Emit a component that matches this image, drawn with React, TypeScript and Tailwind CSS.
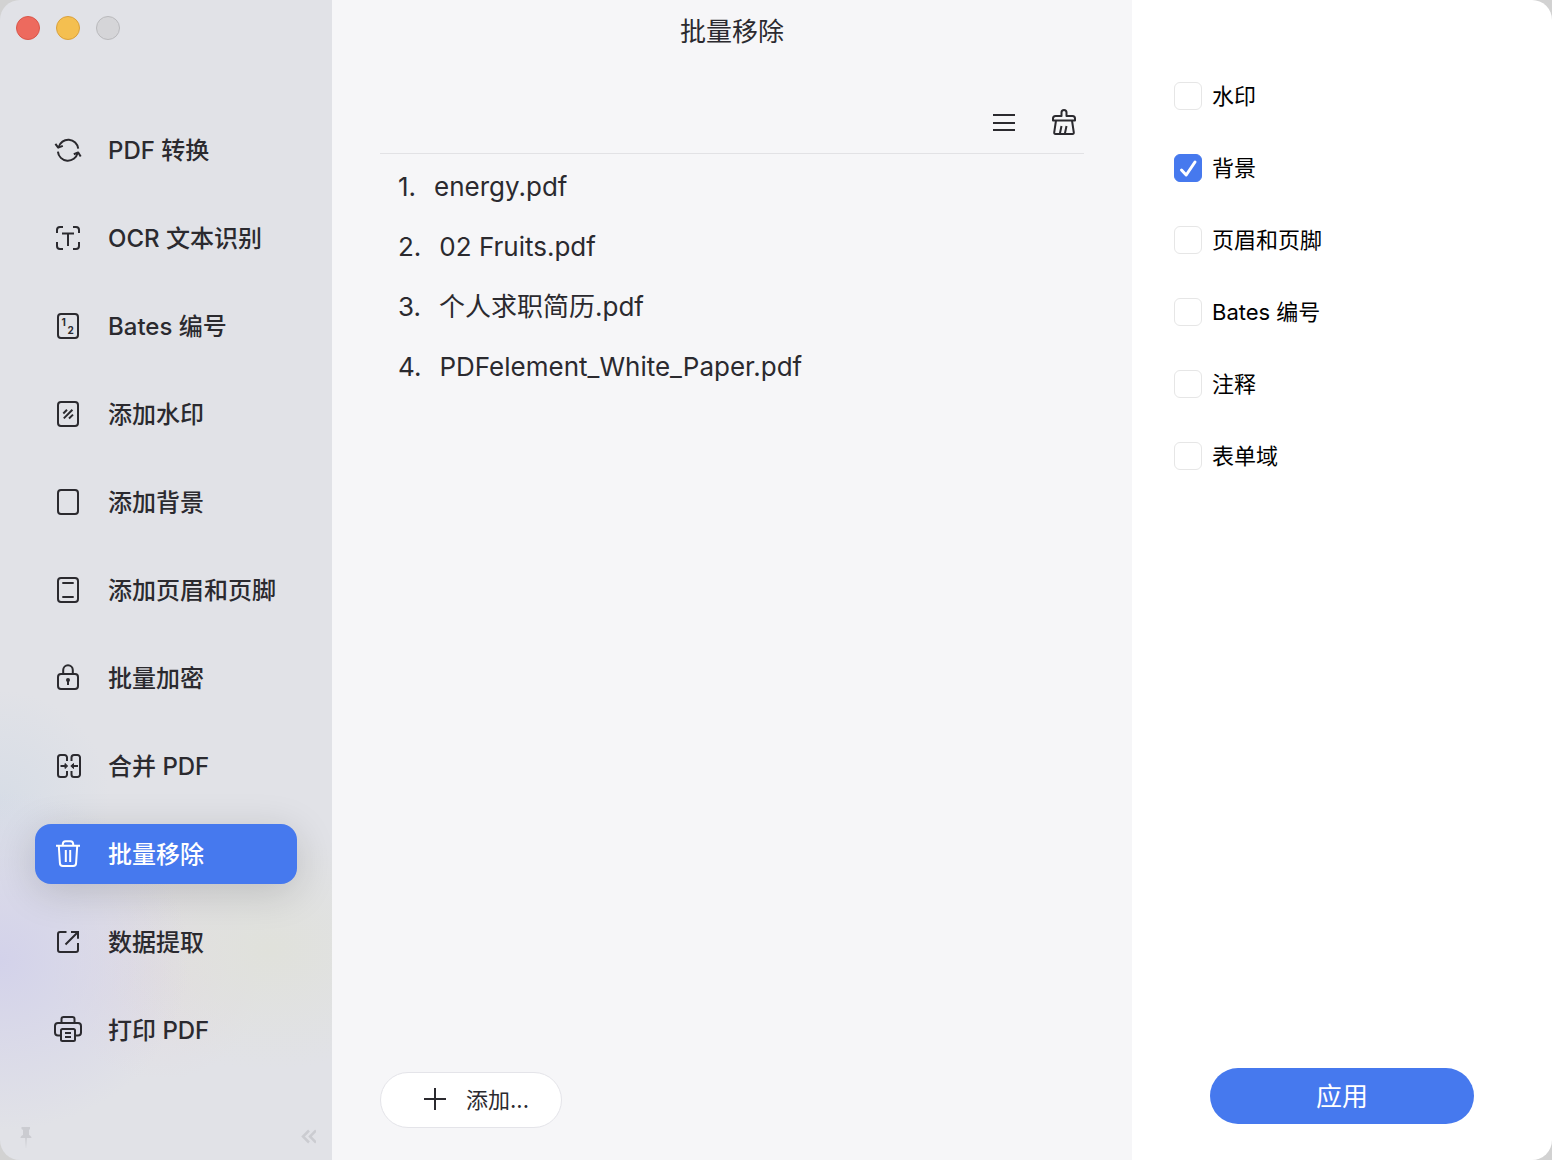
import { useState } from "react";
import type { ReactNode } from "react";

interface NavItem {
  id: string;
  label: string;
  icon: ReactNode;
}

interface RemoveOption {
  id: string;
  label: string;
}

function Icon({ children }: { children: ReactNode }) {
  return (
    <svg
      viewBox="0 0 28 28"
      className="w-7 h-7 shrink-0 overflow-visible"
      fill="none"
      stroke="currentColor"
      strokeWidth="2"
      strokeLinejoin="round"
      aria-hidden="true"
    >
      {children}
    </svg>
  );
}

const pageFrame = <rect x="4" y="2" width="20" height="24" rx="3" />;

const navItems: NavItem[] = [
  {
    id: "convert",
    label: "PDF 转换",
    icon: (
      <Icon>
        <path d="M4.6 11.2A10 10 0 0 1 24.2 12.6M3.9 15.6A10 10 0 0 0 23.6 17" />
        <path d="M1.4 7.8L4.2 11.7L8.8 9.8M26.7 20.5L24.2 16.4L19.8 18.2" />
      </Icon>
    ),
  },
  {
    id: "ocr",
    label: "OCR 文本识别",
    icon: (
      <Icon>
        <path d="M3 9V6a3 3 0 0 1 3-3h3M19 3h3a3 3 0 0 1 3 3v3M25 18v4a3 3 0 0 1-3 3h-3M9 25H6a3 3 0 0 1-3-3v-4" />
        <path d="M8 9.5h12M14 9.5V22" />
      </Icon>
    ),
  },
  {
    id: "bates",
    label: "Bates 编号",
    icon: (
      <Icon>
        {pageFrame}
        <g fill="currentColor" stroke="none" className="text-[10px] font-bold">
          <text x="7.5" y="13.5">1</text>
          <text x="13.5" y="21.7">2</text>
        </g>
      </Icon>
    ),
  },
  {
    id: "watermark",
    label: "添加水印",
    icon: (
      <Icon>
        {pageFrame}
        <path d="M9.3 13.5L13 9.8M9.8 18.4L18.4 9.8M15 18.4L19 14.6" />
      </Icon>
    ),
  },
  { id: "background", label: "添加背景", icon: <Icon>{pageFrame}</Icon> },
  {
    id: "header-footer",
    label: "添加页眉和页脚",
    icon: (
      <Icon>
        {pageFrame}
        <path d="M8.3 7h11.4M8.3 21h11.4" />
      </Icon>
    ),
  },
  {
    id: "encrypt",
    label: "批量加密",
    icon: (
      <Icon>
        <rect x="4" y="10" width="20" height="15" rx="3" />
        <path d="M9.2 10V6a4.8 4.8 0 0 1 9.6 0v4M14 16v5" />
        <circle cx="14" cy="16" r="2" fill="currentColor" stroke="none" />
      </Icon>
    ),
  },
  {
    id: "merge",
    label: "合并 PDF",
    icon: (
      <Icon>
        <path d="M13 9V5.5A2.5 2.5 0 0 0 10.5 3h-4A2.5 2.5 0 0 0 4 5.5v17A2.5 2.5 0 0 0 6.5 25h4a2.5 2.5 0 0 0 2.5-2.500V19" />
        <path d="M17.5 9V5.5A2.5 2.5 0 0 1 20 3h3.500A2.5 2.5 0 0 1 26 5.5v17a2.5 2.5 0 0 1-2.500 2.500H20a2.5 2.5 0 0 1-2.500-2.500V19" />
        <path d="M6.5 14H12M24 14h-5.500" />
        <path d="M11 11.5L13.700 14L11 16.5zM19.5 11.5L16.800 14L19.5 16.5z" fill="currentColor" strokeWidth="1" />
      </Icon>
    ),
  },
  {
    id: "remove",
    label: "批量移除",
    icon: (
      <Icon>
        <path d="M2 5.8H26M8.8 5.5V4A3 3 0 0 1 11.5 1.200H16.5A3 3 0 0 1 19.2 4V5.5" />
        <path d="M4.8 6L5.900 23A3 3 0 0 0 8.900 26H19.100A3 3 0 0 0 22.100 23L23.200 6" />
        <path d="M11.8 10V22M16.2 10V22" />
      </Icon>
    ),
  },
  {
    id: "extract",
    label: "数据提取",
    icon: (
      <Icon>
        <path d="M12.5 4H6A2 2 0 0 0 4 6V22A2 2 0 0 0 6 24H22A2 2 0 0 0 24 22V15" />
        <path d="M17 4H24V10.8M11.5 16.5L24 4" strokeLinejoin="miter" />
      </Icon>
    ),
  },
  {
    id: "print",
    label: "打印 PDF",
    icon: (
      <Icon>
        <path d="M7.5 7V3A2 2 0 0 1 9.5 1H18.5A2 2 0 0 1 20.5 3V7" />
        <path d="M7 19.500H4A3 3 0 0 1 1 16.5V10A3 3 0 0 1 4 7H24A3 3 0 0 1 27 10V16.5A3 3 0 0 1 24 19.5H21" />
        <rect x="7" y="13" width="14" height="12" rx="1.5" />
        <path d="M11 17H17M11 21H17" />
      </Icon>
    ),
  },
];

const files = ["energy.pdf", "02 Fruits.pdf", "个人求职简历.pdf", "PDFelement_White_Paper.pdf"];

const removeOptions: RemoveOption[] = [
  { id: "watermark", label: "水印" },
  { id: "background", label: "背景" },
  { id: "header-footer", label: "页眉和页脚" },
  { id: "bates", label: "Bates 编号" },
  { id: "comments", label: "注释" },
  { id: "fields", label: "表单域" },
];

function WindowButtons() {
  return (
    <div className="flex gap-4 px-4 pt-4">
      <button aria-label="关闭" className="size-6 rounded-full border border-[#d9564a] bg-[#ed6a5e]" />
      <button aria-label="最小化" className="size-6 rounded-full border border-[#d9a03c] bg-[#f4bf50]" />
      <button aria-label="缩放" disabled className="size-6 rounded-full border border-[#b9b9bc] bg-[#d5d5d8]" />
    </div>
  );
}

function Sidebar({ active, onSelect }: { active: string; onSelect: (id: string) => void }) {
  return (
    <aside className="flex w-[332px] shrink-0 flex-col bg-[#e1e2e7] bg-[radial-gradient(ellipse_190px_170px_at_0px_960px,#d3d2ea,transparent),radial-gradient(ellipse_170px_120px_at_270px_950px,#e0e1db,transparent),radial-gradient(ellipse_110px_110px_at_0px_800px,#d7dde6,transparent),radial-gradient(ellipse_110px_110px_at_160px_970px,#e2dce1,transparent)]">
      <WindowButtons />
      <nav className="mt-20 flex flex-col gap-7 px-[35px]">
        {navItems.map((item) => (
          <button
            key={item.id}
            onClick={() => onSelect(item.id)}
            className={
              item.id === active
                ? "flex h-[60px] items-center gap-[26px] rounded-2xl bg-[#4679ee] pl-[19px] text-2xl font-medium text-white shadow-[0_8px_40px_rgba(0,0,0,0.16)]"
                : "flex h-[60px] items-center gap-[26px] rounded-2xl pl-[19px] text-2xl font-medium text-[#2b2a2f]"
            }
          >
            {item.icon}
            <span className="whitespace-nowrap pt-0.5">{item.label}</span>
          </button>
        ))}
      </nav>
      <div className="mt-auto flex items-center justify-between px-4 pb-3 text-[#cbccd1]">
        <button aria-label="固定">
          <svg viewBox="0 0 20 24" className="h-6 w-5" fill="currentColor" aria-hidden="true">
            <path d="M5.5 3H14V5L13 6V11C14.5 11.5 15.5 12.5 15.5 14H10.800L10 25L9.200 14H4.500C4.5 12.5 5.5 11.5 7 11V6L5.500 5z" />
          </svg>
        </button>
        <button aria-label="收起侧边栏">
          <svg viewBox="0 0 16 24" className="h-6 w-4" fill="none" stroke="currentColor" strokeWidth="2.5" aria-hidden="true">
            <path d="M9 6.5L3 12.5L9 18.5M16 6.5L10 12.5L16 18.5" />
          </svg>
        </button>
      </div>
    </aside>
  );
}

function FilePanel() {
  return (
    <main className="flex min-w-0 flex-1 flex-col bg-[#f6f6f8] px-12 pb-8 text-[#2b2a2f]">
      <h1 className="mt-3.5 text-center text-[26px] leading-9">批量移除</h1>
      <div className="mt-12 flex h-14 items-center justify-end gap-8 border-b border-[#e2e2e5] pr-[6px] pb-2">
        <button aria-label="列表">
          <Icon>
            <path d="M3 7H25M3 15H25M3 22H25" />
          </Icon>
        </button>
        <button aria-label="清空">
          <Icon>
            <path d="M11.5 8V4.5A2.5 2.5 0 0 1 16.5 4.5V8H22.5A2.5 2.5 0 0 1 25 10.5V12.5H3V10.5A2.5 2.5 0 0 1 5.5 8z" />
            <path d="M6 12.5L4.200 24.5Q4 26 5.500 26H22.5Q24 26 23.800 24.5L22 12.5" />
            <path d="M11.5 18L9.800 26M16.5 18L14.800 26" />
          </Icon>
        </button>
      </div>
      <ol className="mt-0.5">
        {files.map((name, i) => (
          <li key={name} className="flex h-[60px] items-center gap-[18px] pl-[18px] text-[26px]">
            <span>{i + 1}.</span>
            <span className="truncate">{name}</span>
          </li>
        ))}
      </ol>
      <button className="mt-auto flex h-14 w-[182px] items-center gap-[17px] rounded-full border border-[#e4e4e9] bg-white pl-10 text-[22px]">
        <Icon>
          <path d="M3 13H25M14 2V24" />
        </Icon>
        添加...
      </button>
    </main>
  );
}

function OptionsPanel() {
  const [checked, setChecked] = useState<string[]>(["background"]);

  const toggle = (id: string) =>
    setChecked((prev) => (prev.includes(id) ? prev.filter((x) => x !== id) : [...prev, id]));

  return (
    <section className="flex w-[420px] shrink-0 flex-col bg-white px-[42px] pt-20 pb-9">
      <div className="flex flex-col gap-10">
        {removeOptions.map((option) => (
          <label key={option.id} className="flex h-8 items-center gap-[10px] text-[22px] text-black">
            <span className="grid">
              <input
                type="checkbox"
                checked={checked.includes(option.id)}
                onChange={() => toggle(option.id)}
                className="peer col-start-1 row-start-1 size-7 appearance-none rounded-md border border-[#e6e6e6] bg-white checked:border-[#4679ee] checked:bg-[#4679ee]"
              />
              <svg
                viewBox="0 0 28 28"
                className="pointer-events-none invisible col-start-1 row-start-1 size-7 text-white peer-checked:visible"
                fill="none"
                stroke="currentColor"
                strokeWidth="3"
                strokeLinecap="round"
                strokeLinejoin="round"
                aria-hidden="true"
              >
                <path d="M7.5 16L12.2 21L21 8" />
              </svg>
            </span>
            {option.label}
          </label>
        ))}
      </div>
      <button className="mx-9 mt-auto h-14 rounded-full bg-[#4679ee] text-[26px] text-white">应用</button>
    </section>
  );
}

export default function App() {
  const [active, setActive] = useState("remove");

  return (
    <div className="min-h-screen bg-[#d2d2d2] font-['Inter','Noto_Sans_CJK_SC',sans-serif]">
      <div className="flex min-h-screen overflow-hidden rounded-[20px]">
        <Sidebar active={active} onSelect={setActive} />
        <FilePanel />
        <OptionsPanel />
      </div>
    </div>
  );
}
